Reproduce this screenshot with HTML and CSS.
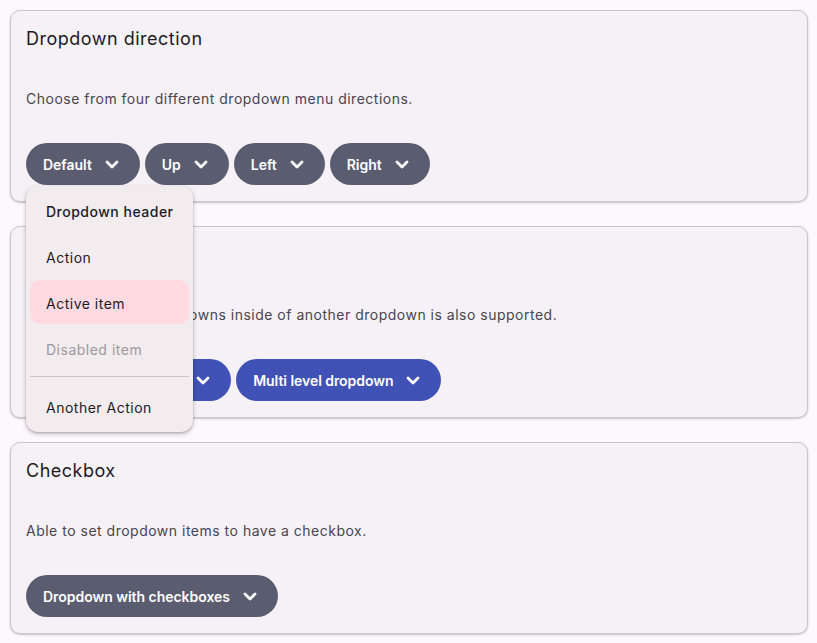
FILE: index.html
```html
<!DOCTYPE html>
<html lang="en">
<head>
<meta charset="utf-8">
<title>Dropdowns</title>
<link rel="stylesheet" href="styles.css">
</head>
<body>
<main class="page">
  <section class="card">
    <h2 class="card-title">Dropdown direction</h2>
    <p class="card-desc">Choose from four different dropdown menu directions.</p>
    <div class="btn-row">
      <div class="dropdown">
        <button class="btn">Default <svg class="chev" viewBox="0 0 24 24"><polyline points="7,10 12,15 17,10"/></svg></button>
        <div class="menu">
          <div class="menu-item header">Dropdown header</div>
          <div class="menu-item">Action</div>
          <div class="menu-item active">Active item</div>
          <div class="menu-item disabled">Disabled item</div>
          <div class="menu-divider"></div>
          <div class="menu-item">Another Action</div>
        </div>
      </div>
      <button class="btn">Up <svg class="chev" viewBox="0 0 24 24"><polyline points="7,10 12,15 17,10"/></svg></button>
      <button class="btn">Left <svg class="chev" viewBox="0 0 24 24"><polyline points="7,10 12,15 17,10"/></svg></button>
      <button class="btn">Right <svg class="chev" viewBox="0 0 24 24"><polyline points="7,10 12,15 17,10"/></svg></button>
    </div>
  </section>

  <section class="card">
    <h2 class="card-title">Multi level</h2>
    <p class="card-desc">Using multi level dropdowns inside of another dropdown is also supported.</p>
    <div class="btn-row">
      <button class="btn btn-primary">Multi level dropdown <svg class="chev" viewBox="0 0 24 24"><polyline points="7,10 12,15 17,10"/></svg></button>
      <button class="btn btn-primary">Multi level dropdown <svg class="chev" viewBox="0 0 24 24"><polyline points="7,10 12,15 17,10"/></svg></button>
    </div>
  </section>

  <section class="card">
    <h2 class="card-title">Checkbox</h2>
    <p class="card-desc">Able to set dropdown items to have a checkbox.</p>
    <div class="btn-row">
      <button class="btn">Dropdown with checkboxes <svg class="chev" viewBox="0 0 24 24"><polyline points="7,10 12,15 17,10"/></svg></button>
    </div>
  </section>
</main>
</body>
</html>
```
FILE: styles.css
```css
* { box-sizing: border-box; }

html, body {
  margin: 0;
  padding: 0;
  background: #fdf8fd;
}

body {
  font-family: Inter, "Noto Sans", sans-serif;
  color: #1c1b1f;
}

.page {
  padding: 10px 9px 10px 10px;
  display: flex;
  flex-direction: column;
  gap: 24px;
}

.card {
  background: #f5f1f6;
  border: 1px solid #cbc6cc;
  border-radius: 10px;
  box-shadow: 0 1px 2px rgba(0, 0, 0, 0.22);
  padding: 15px 15px 16px;
  height: 192px;
}

.card-title {
  margin: 0 0 37px;
  font-size: 18px;
  line-height: 26px;
  font-weight: 400;
  letter-spacing: 0.5px;
  color: #1c1b1f;
}

.card-desc {
  margin: 0 0 34px;
  font-size: 14px;
  line-height: 20px;
  letter-spacing: 0.5px;
  color: #49454f;
}

.btn-row {
  display: flex;
  gap: 5px;
  align-items: flex-start;
}

.dropdown {
  position: relative;
}

.btn {
  display: inline-flex;
  align-items: center;
  gap: 8px;
  height: 42px;
  padding: 0 16px 0 17px;
  border: none;
  border-radius: 21px;
  background: #5a5c70;
  color: #ffffff;
  font-family: Inter, "Noto Sans", sans-serif;
  font-size: 14px;
  font-weight: 600;
  letter-spacing: -0.03px;
  cursor: pointer;
}

.btn-primary {
  background: #4152b6;
  letter-spacing: -0.05px;
}

.chev {
  width: 24px;
  height: 24px;
  fill: none;
  stroke: #ffffff;
  stroke-width: 2.8;
  stroke-linecap: round;
  stroke-linejoin: round;
}

.menu {
  position: absolute;
  top: 43px;
  left: 0;
  width: 167px;
  background: #f2ecef;
  border-radius: 12px;
  box-shadow: 0 2px 5px rgba(0, 0, 0, 0.22), 0 1px 2px rgba(0, 0, 0, 0.18);
  padding: 2px 0;
  z-index: 10;
}

.menu-item {
  height: 46px;
  margin: 0 4px;
  padding: 0 16px;
  display: flex;
  align-items: center;
  font-size: 14px;
  letter-spacing: 0.5px;
  color: #1c1b1f;
  border-radius: 10px;
  white-space: nowrap;
}

.menu-item.header {
  font-weight: 500;
  letter-spacing: 0.5px;
}

.menu-item.active {
  background: #ffdae1;
  height: 44px;
  margin-bottom: 2px;
  padding-top: 3px;
}

.menu-item.disabled {
  color: #9d989e;
}

.menu-divider {
  height: 1px;
  background: #cbc5ca;
  margin: 4px 4px 7px;
}
```
